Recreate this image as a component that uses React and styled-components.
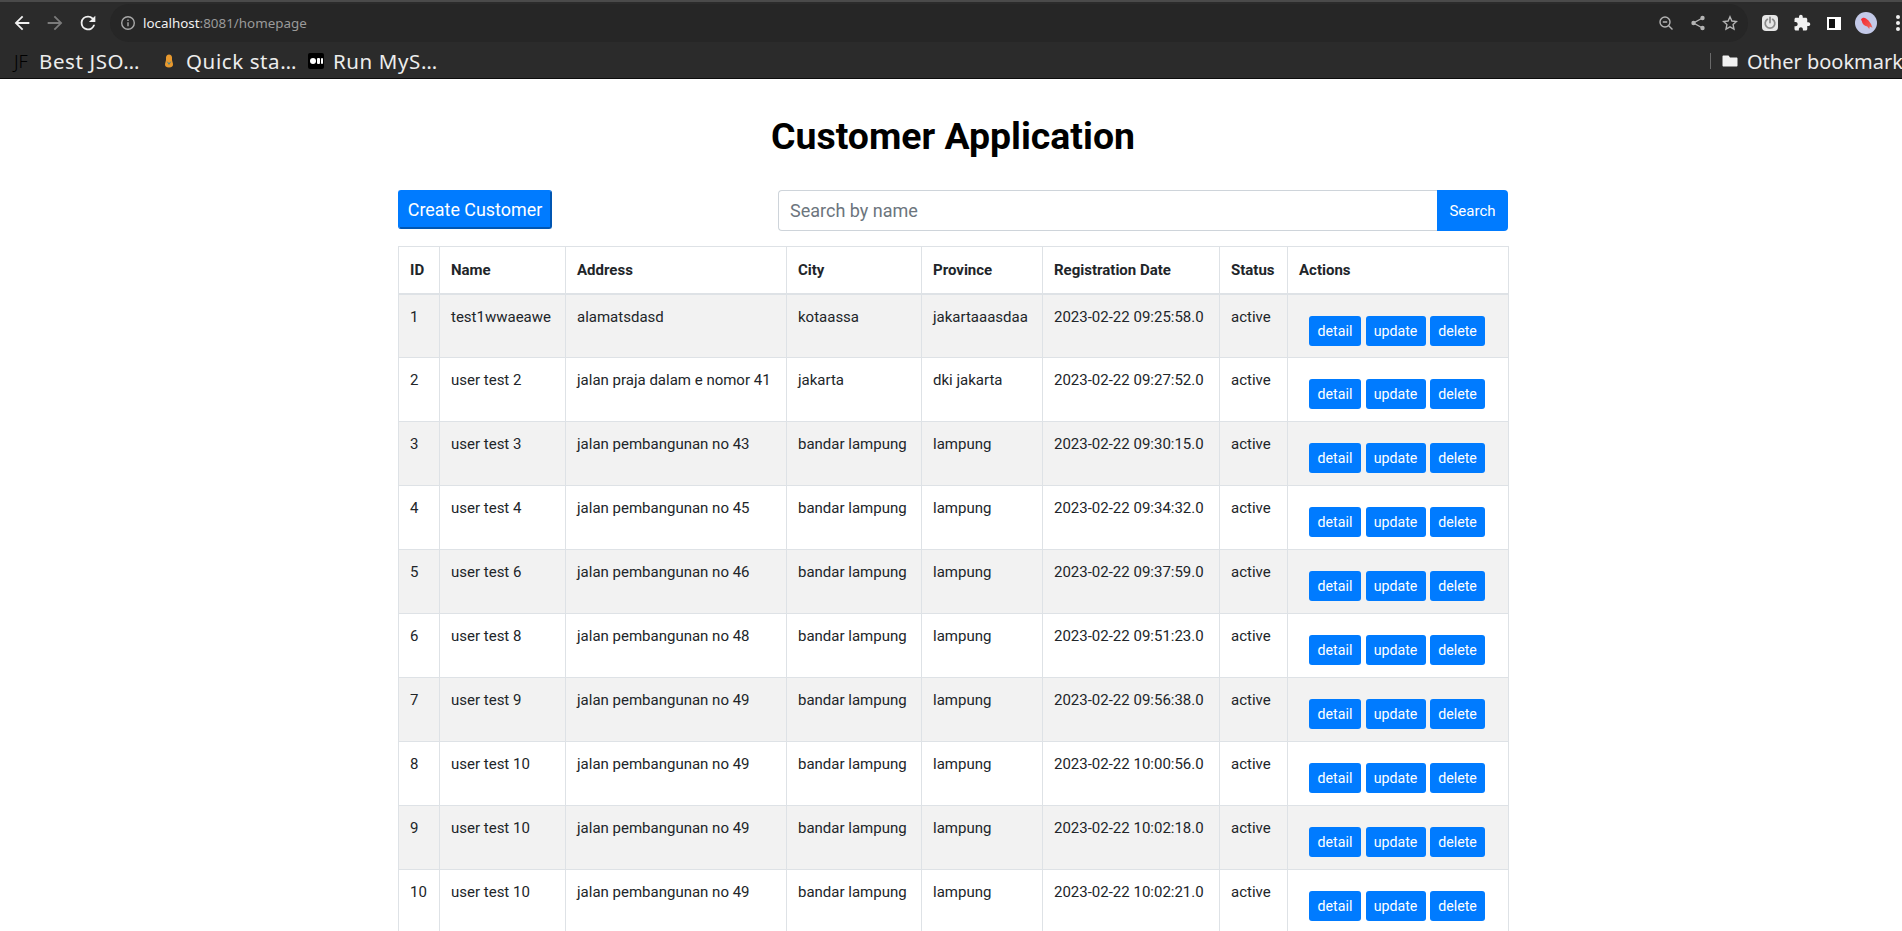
import React from 'react';
import styled, { createGlobalStyle } from 'styled-components';

const customers = [
  [1, 'test1wwaeawe', 'alamatsdasd', 'kotaassa', 'jakartaaasdaa', '2023-02-22 09:25:58.0'],
  [2, 'user test 2', 'jalan praja dalam e nomor 41', 'jakarta', 'dki jakarta', '2023-02-22 09:27:52.0'],
  [3, 'user test 3', 'jalan pembangunan no 43', 'bandar lampung', 'lampung', '2023-02-22 09:30:15.0'],
  [4, 'user test 4', 'jalan pembangunan no 45', 'bandar lampung', 'lampung', '2023-02-22 09:34:32.0'],
  [5, 'user test 6', 'jalan pembangunan no 46', 'bandar lampung', 'lampung', '2023-02-22 09:37:59.0'],
  [6, 'user test 8', 'jalan pembangunan no 48', 'bandar lampung', 'lampung', '2023-02-22 09:51:23.0'],
  [7, 'user test 9', 'jalan pembangunan no 49', 'bandar lampung', 'lampung', '2023-02-22 09:56:38.0'],
  [8, 'user test 10', 'jalan pembangunan no 49', 'bandar lampung', 'lampung', '2023-02-22 10:00:56.0'],
  [9, 'user test 10', 'jalan pembangunan no 49', 'bandar lampung', 'lampung', '2023-02-22 10:02:18.0'],
  [10, 'user test 10', 'jalan pembangunan no 49', 'bandar lampung', 'lampung', '2023-02-22 10:02:21.0'],
];

const headers = [
  ['ID', 41],
  ['Name', 126],
  ['Address', 221],
  ['City', 135],
  ['Province', 121],
  ['Registration Date', 177],
  ['Status', 68],
  ['Actions', 221],
];

const App = () => {
  return (
    <>
      <GlobalStyle />
      <Viewport>
        <Browser>
          <Toolbar>
            <NavIcon viewBox="0 0 24 24"><path d="M20 11H7.800l5.600-5.600L12 4l-8 8 8 8 1.400-1.400L7.800 13H20z" /></NavIcon>
            <NavIcon $dim viewBox="0 0 24 24"><path d="M4 11h12.200l-5.600-5.600L12 4l8 8-8 8-1.400-1.400 5.600-5.600H4z" /></NavIcon>
            <NavIcon viewBox="0 0 24 24"><path d="M17.650 6.350A7.960 7.960 0 0 0 12 4a8 8 0 1 0 7.730 10h-2.080A6 6 0 1 1 12 6c1.660 0 3.140.690 4.220 1.780L13 11h7V4z" /></NavIcon>
            <Omnibox>
              <InfoIcon viewBox="0 0 16 16">
                <circle cx="8" cy="8" r="6.300" />
                <path d="M8 7.200v4M8 4.400v1.600" />
              </InfoIcon>
              <Url>localhost<UrlRest>:8081/homepage</UrlRest></Url>
              <OmniIcons>
                <OmniIcon viewBox="0 0 16 16">
                  <circle cx="7" cy="7" r="5" />
                  <path d="M4.800 7h4.400M10.700 10.700 14.500 14.500" />
                </OmniIcon>
                <OmniIcon viewBox="0 0 16 16">
                  <path d="M12.500 3 3.500 8l9 5" />
                  <circle className="solid" cx="12.500" cy="3" r="2.200" />
                  <circle className="solid" cx="3.500" cy="8" r="2.200" />
                  <circle className="solid" cx="12.500" cy="13" r="2.200" />
                </OmniIcon>
                <OmniIcon viewBox="0 0 16 16">
                  <path d="m8 1.800 1.900 4.200 4.600.5-3.400 3.100.9 4.600L8 11.900l-4 2.300.9-4.600L1.500 6.500l4.600-.5z" />
                </OmniIcon>
              </OmniIcons>
            </Omnibox>
            <Extensions>
              <ExtSlot>
                <PowerBadge>
                  <svg viewBox="0 0 16 16" width="14" height="14" fill="none" stroke="#8a8a8a" strokeWidth="2" strokeLinecap="round">
                    <path d="M5 3.800a5.500 5.500 0 1 0 6 0M8 1.500v6" />
                  </svg>
                </PowerBadge>
              </ExtSlot>
              <ExtSlot>
                <svg viewBox="0 0 24 24" width="18" height="18" fill="#f1f1f1">
                  <path d="M20.500 11H19V7c0-1.100-.9-2-2-2h-4V3.500C13 2.120 11.880 1 10.500 1S8 2.120 8 3.500V5H4c-1.100 0-1.990.9-1.990 2v3.800H3.500c1.490 0 2.700 1.210 2.700 2.700s-1.210 2.700-2.700 2.700H2V20c0 1.100.9 2 2 2h3.800v-1.500c0-1.490 1.210-2.700 2.700-2.700 1.490 0 2.700 1.210 2.700 2.700V22H17c1.100 0 2-.9 2-2v-4h1.500c1.380 0 2.500-1.120 2.500-2.500S21.880 11 20.500 11z" />
                </svg>
              </ExtSlot>
              <ExtSlot><SidePanel /></ExtSlot>
              <ExtSlot>
                <Avatar>
                  <svg viewBox="0 0 22 22" width="22" height="22">
                    <defs>
                      <linearGradient id="bird" x1="0" y1="0" x2="1" y2="1">
                        <stop offset="0" stopColor="#f5222d" />
                        <stop offset="1" stopColor="#ee6a5c" />
                      </linearGradient>
                    </defs>
                    <path fill="url(#bird)" d="M6 7.500C6.800 5.500 9.500 5 11 6.500l2.500 2 2.500 3.500 1.500 3.800-2.800-1.400-.4 2.600-2-2.500C9 14 7 11.500 7 9.500z" />
                  </svg>
                </Avatar>
              </ExtSlot>
              <ExtSlot><Kebab><i /><i /><i /></Kebab></ExtSlot>
            </Extensions>
          </Toolbar>
          <Bookmarks>
            <Bookmark>
              <Favicon>JF</Favicon>
              Best JSO…
            </Bookmark>
            <Bookmark>
              <svg viewBox="0 0 16 16" width="16" height="16">
                <path fill="#e8992e" d="M8 1.500c2 0 3 1.500 3 3v2.500l1 4c.2 2-1 3.500-4 3.500s-4.200-1.500-4-3.500l1-4V4.500c0-1.500 1-3 3-3z" />
                <path fill="#3f7f8f" d="M5.500 8 8 10l2.500-2L8 12z" />
              </svg>
              Quick sta…
            </Bookmark>
            <Bookmark>
              <MediumIcon><b /><b /><b /></MediumIcon>
              Run MyS…
            </Bookmark>
            <OtherBookmarks>
              <svg viewBox="0 0 16 16" width="16" height="16" fill="#f1f1f1">
                <path d="M1.500 2.500h5l1.500 2h6.500c.5 0 1 .4 1 1v7c0 .6-.5 1-1 1h-13c-.5 0-1-.4-1-1v-9c0-.6.5-1 1-1z" />
              </svg>
              Other bookmark
            </OtherBookmarks>
          </Bookmarks>
        </Browser>
        <Page>
          <Title>Customer Application</Title>
          <Controls>
            <CreateButton type="button">Create Customer</CreateButton>
            <SearchGroup>
              <SearchInput type="text" placeholder="Search by name" readOnly />
              <SearchButton type="button">Search</SearchButton>
            </SearchGroup>
          </Controls>
          <Table>
            <colgroup>
              {headers.map(([label, width]) => (
                <col key={label} width={width} />
              ))}
            </colgroup>
            <thead>
              <tr>
                {headers.map(([label]) => (
                  <Th key={label}>{label}</Th>
                ))}
              </tr>
            </thead>
            <tbody>
              {customers.map(([id, name, address, city, province, date]) => (
                <Row key={id} $odd={id % 2 === 1}>
                  <Td>{id}</Td>
                  <Td>{name}</Td>
                  <Td>{address}</Td>
                  <Td>{city}</Td>
                  <Td>{province}</Td>
                  <Td>{date}</Td>
                  <Td>active</Td>
                  <Td>
                    <Actions>
                      <SmallButton type="button" $width={52}>detail</SmallButton>
                      <SmallButton type="button" $width={60}>update</SmallButton>
                      <SmallButton type="button" $width={55}>delete</SmallButton>
                    </Actions>
                  </Td>
                </Row>
              ))}
            </tbody>
          </Table>
        </Page>
      </Viewport>
    </>
  );
};

export default App;

const GlobalStyle = createGlobalStyle`
  html, body {
    margin: 0;
    height: 100%;
    overflow: hidden;
    background: #fff;
  }
  * {
    box-sizing: border-box;
  }
`;

const Viewport = styled.div`
  width: 1902px;
  height: 931px;
  overflow: hidden;
  font-family: Roboto, sans-serif;
  font-size: 16px;
  color: #212529;
`;

const Browser = styled.header`
  height: 79px;
  background: #2b2b2b;
  border-top: 2px solid #4a4a4a;
  border-bottom: 1px solid #0c0c0c;
  font-family: "Noto Sans", sans-serif;
`;

const Toolbar = styled.div`
  display: flex;
  align-items: center;
  height: 42px;
  padding-left: 11px;
`;

const NavIcon = styled.svg`
  flex: none;
  width: 22px;
  height: 22px;
  margin-right: 11px;
  fill: ${(props) => (props.$dim ? '#7b7b7b' : '#f1f1f1')};
`;

const Omnibox = styled.div`
  display: flex;
  align-items: center;
  flex: 1;
  height: 38px;
  padding: 0 10px;
  background: #262626;
  border-radius: 19px;
`;

const InfoIcon = styled.svg`
  width: 16px;
  height: 16px;
  fill: none;
  stroke: #a8a8a8;
  stroke-width: 1.4;
`;

const Url = styled.span`
  margin-left: 7px;
  font-size: 13.4px;
  color: #f1f1f1;
`;

const UrlRest = styled.span`
  color: #9a9a9a;
`;

const OmniIcons = styled.div`
  display: flex;
  align-items: center;
  gap: 16px;
  margin-left: auto;
`;

const OmniIcon = styled.svg`
  width: 16px;
  height: 16px;
  fill: none;
  stroke: #b4b4b4;
  stroke-width: 1.4;

  .solid {
    fill: #b4b4b4;
    stroke: none;
  }
`;

const Extensions = styled.div`
  display: flex;
  flex: none;
  align-items: center;
  width: 154px;
  padding-left: 6px;
`;

const ExtSlot = styled.span`
  display: flex;
  flex: none;
  align-items: center;
  justify-content: center;
  width: 32px;
`;

const PowerBadge = styled.span`
  display: flex;
  align-items: center;
  justify-content: center;
  width: 16px;
  height: 16px;
  background: #e6e6e6;
  border-radius: 4px;
`;

const SidePanel = styled.span`
  width: 14px;
  height: 13px;
  background: linear-gradient(to right, #111 60%, #fff 60%);
  border: 2px solid #fff;
`;

const Avatar = styled.span`
  display: flex;
  width: 22px;
  height: 22px;
  background: #c3c9e8;
  border-radius: 50%;
`;

const Kebab = styled.span`
  display: flex;
  flex-direction: column;
  gap: 2px;

  i {
    width: 4px;
    height: 4px;
    background: #f1f1f1;
    border-radius: 50%;
  }
`;

const Bookmarks = styled.nav`
  display: flex;
  align-items: center;
  height: 34px;
  padding-left: 14px;
  overflow: hidden;
  white-space: nowrap;
`;

const Bookmark = styled.span`
  display: flex;
  align-items: center;
  gap: 9px;
  width: 147px;
  font-size: 20.500px;
  letter-spacing: 0.6px;
  color: #ededed;
`;

const Favicon = styled.span`
  flex: none;
  width: 16px;
  font-size: 18px;
  font-weight: 300;
  letter-spacing: 0;
  color: #000;
`;

const MediumIcon = styled.span`
  display: flex;
  align-items: center;
  justify-content: center;
  gap: 1px;
  width: 16px;
  height: 16px;
  background: #000;
  border-radius: 2px;

  b {
    width: 2px;
    height: 6px;
    background: #fff;
    border-radius: 1px;
  }
  b:first-child {
    width: 6px;
    border-radius: 50%;
  }
  b:nth-child(2) {
    width: 3px;
  }
`;

const OtherBookmarks = styled.span`
  display: flex;
  align-items: center;
  gap: 9px;
  margin-left: auto;
  width: 192px;
  height: 16px;
  padding-left: 11px;
  border-left: 1px solid #6a6a6a;
  font-size: 20px;
  color: #ededed;

  svg {
    flex: none;
  }
`;

const Page = styled.main`
  width: 1110px;
  margin-left: 398px;
`;

const Title = styled.h1`
  margin: 0;
  padding-top: 35px;
  height: 111px;
  font-size: 37.400px;
  font-weight: 700;
  line-height: 1.2;
  text-align: center;
  color: #000;
`;

const Controls = styled.div`
  display: flex;
  justify-content: space-between;
  align-items: flex-start;
  height: 56px;
`;

const CreateButton = styled.button`
  width: 154px;
  height: 39px;
  padding: 0;
  background: #007bff;
  border: 2px solid #007bff;
  border-right-color: #0056b3;
  border-bottom-color: #0056b3;
  border-radius: 3px;
  font-family: Roboto, sans-serif;
  font-size: 17.900px;
  color: #fff;
`;

const SearchGroup = styled.div`
  display: flex;
  width: 730px;
  height: 41px;
`;

const SearchInput = styled.input`
  flex: 1;
  min-width: 0;
  padding: 0 11px;
  background: #fff;
  border: 1px solid #ced4da;
  border-right: none;
  border-radius: 4px 0 0 4px;
  outline: none;
  font-family: Roboto, sans-serif;
  font-size: 18px;
  color: #495057;

  &::placeholder {
    color: #6c757d;
    opacity: 1;
  }
`;

const SearchButton = styled.button`
  width: 71px;
  padding: 0;
  background: #007bff;
  border: none;
  border-radius: 0 4px 4px 0;
  font-family: Roboto, sans-serif;
  font-size: 15px;
  color: #fff;
`;

const Table = styled.table`
  width: 1110px;
  table-layout: fixed;
  border-collapse: collapse;
`;

const Th = styled.th`
  height: 47px;
  padding: 0 11px;
  text-align: left;
  vertical-align: middle;
  font-size: 15px;
  font-weight: 700;
  border: 1px solid #dee2e6;
  border-bottom-width: 2px;
`;

const Row = styled.tr`
  background: ${(props) => (props.$odd ? '#f2f2f2' : '#fff')};
`;

const Td = styled.td`
  height: 64px;
  padding: 10px 11px 0;
  vertical-align: top;
  line-height: 24px;
  font-size: 15px;
  white-space: nowrap;
  border: 1px solid #dee2e6;
`;

const Actions = styled.div`
  display: flex;
  gap: 4.500px;
  margin: 11px 0 11px 10px;
`;

const SmallButton = styled.button`
  width: ${(props) => props.$width}px;
  height: 30px;
  padding: 0;
  background: #007bff;
  border: none;
  border-radius: 3px;
  font-family: Roboto, sans-serif;
  font-size: 14.200px;
  color: #fff;
`;
